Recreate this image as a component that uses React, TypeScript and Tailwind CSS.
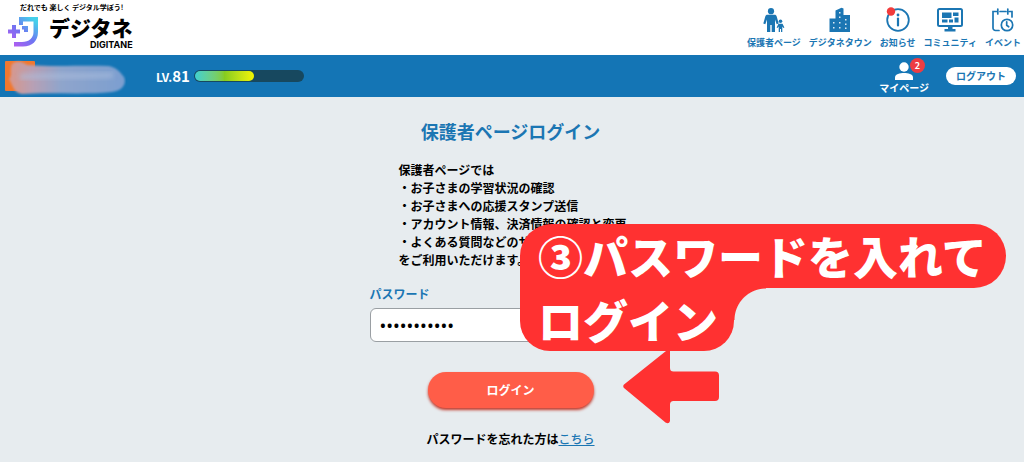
import type { ReactNode } from "react";

function ParentIcon() {
  return (
    <svg viewBox="0 0 22 26" className="h-[26px] w-[22px]" fill="currentColor" aria-hidden="true">
      <circle cx="8" cy="4.200" r="3.100" />
      <path d="M4.500 7.800h7c1.200 0 1.900.6 2.200 1.700l2 7-2 .8L12 12.500V25H8.700V18H7.300v7H4V12.500L2.300 17.300.3 16.500 2.300 9.500c.3-1.100 1-1.700 2.200-1.700z" />
      <circle cx="17.500" cy="14.300" r="1.800" />
      <path d="M15.500 16.700h4l1.900 3.900-1 .5-1.100-1.600V25H18v-3h-1v3h-1.300v-5.500l-1.100 1.600-1-.5z" />
    </svg>
  );
}

function TownIcon() {
  return (
    <svg viewBox="0 0 22 26" className="h-[26px] w-[22px]" aria-hidden="true">
      <path fill="currentColor" d="M.5 11.500H6.500V3.500L12.500.8l2 .7V8H21v17H.5z" />
      <path fill="#fff" opacity=".85" d="M10 5h1.500v1.500H10zM10 9.500h1.500V11H10zM16 12h1.500v1.500H16zM4 15h1.500v1.500H4zM10 15h1.500v1.500H10zM16 16.500h1.500V18H16zM4 20h1.500v1.500H4zM10 20h1.500v1.500H10zM16 20.500h1.500V22H16z" />
    </svg>
  );
}

function NoticeIcon() {
  return (
    <svg viewBox="0 0 24 26" className="h-[26px] w-6" fill="none" aria-hidden="true">
      <circle cx="12" cy="13" r="10.800" stroke="currentColor" strokeWidth="1.800" />
      <circle cx="12" cy="8" r="1.400" fill="currentColor" />
      <path d="M12 11.500V18.500" stroke="currentColor" strokeWidth="2.200" strokeLinecap="round" />
      <circle cx="5" cy="4.500" r="4.200" fill="#f23b3b" />
    </svg>
  );
}

function CommunityIcon() {
  return (
    <svg viewBox="0 0 26 26" className="h-[26px] w-[26px]" fill="none" aria-hidden="true">
      <rect x="1" y="2" width="24" height="17" rx="1.500" stroke="currentColor" strokeWidth="2" />
      <path fill="currentColor" d="M5 5.500h9.500V11H5zM5 12.500h5.500V15.500H5zM12 12.500h4V15.500H12zM16 5.500h5.500V9H16zM17.500 10.500h4v5h-4zM11 19h4.500v3.500H11zM7.500 22h11v2.500h-11z" />
    </svg>
  );
}

function EventIcon() {
  return (
    <svg viewBox="0 0 24 26" className="h-[26px] w-6" fill="none" stroke="currentColor" strokeWidth="1.700" strokeLinecap="round" aria-hidden="true">
      <path d="M8 23.500H4.500A2.500 2.500 0 0 1 2 21V4.500h3.500M9 4.500h6M18.500 4.500H21V10M6.800 2v5M16.800 2v5" />
      <circle cx="16" cy="18" r="5.700" />
      <path d="M15.700 14.800v3.500l2 1.500" />
    </svg>
  );
}

function LogoMark() {
  return (
    <svg viewBox="0 0 31 30" className="h-[30px] w-[31px]" fill="none" aria-hidden="true">
      <defs>
        <linearGradient id="mark" x1="4" y1="28" x2="26" y2="3" gradientUnits="userSpaceOnUse">
          <stop stopColor="#b45cf0" />
          <stop offset=".5" stopColor="#6f74f2" />
          <stop offset="1" stopColor="#45d0ea" />
        </linearGradient>
      </defs>
      <path fill="url(#mark)" d="M4 8H8V12.500H12V16.500H8V21H4V16.500H0V12.500H4zM11 0H30V15C30 24 24 29.500 15 29.500H6V25H14C21 25 25.500 21 25.500 15V4.500H15V8H11zM14 9H20V15H16V12.500H14z" />
    </svg>
  );
}

function PlayerName() {
  return (
    <svg viewBox="0 0 126 42" className="h-[42px] w-[126px]" aria-hidden="true">
      <defs>
        <linearGradient id="smear" x1="0" x2="1">
          <stop stopColor="#d9978b" />
          <stop offset=".2" stopColor="#b8a0b4" />
          <stop offset=".45" stopColor="#8fa5cc" />
          <stop offset="1" stopColor="#7c9fd0" />
        </linearGradient>
        <filter id="soft" x="-10%" y="-20%" width="120%" height="140%">
          <feGaussianBlur stdDeviation="1.100" />
        </filter>
        <filter id="softer" x="-10%" y="-200%" width="120%" height="500%">
          <feGaussianBlur stdDeviation="2" />
        </filter>
      </defs>
      <rect x="5" y="6" width="30" height="30" rx="1" fill="#f07830" />
      <path filter="url(#soft)" d="M12 9C17 5 23 7 27 10C54 12 84 10 108 11C116 12 120 17 124 22C127 29 122 36 112 37C84 40 48 37 22 39C14 38 13 31 9 24C13 20 9 15 12 9z" fill="url(#smear)" />
      <path filter="url(#softer)" d="M20 22C48 20 82 22 113 20" stroke="#afc0de" strokeWidth="6" opacity=".5" fill="none" />
    </svg>
  );
}

const navItems: { label: string; icon: ReactNode }[] = [
  { label: "保護者ページ", icon: <ParentIcon /> },
  { label: "デジタネタウン", icon: <TownIcon /> },
  { label: "お知らせ", icon: <NoticeIcon /> },
  { label: "コミュニティ", icon: <CommunityIcon /> },
  { label: "イベント", icon: <EventIcon /> },
];

export default function App() {
  return (
    <div className="relative flex min-h-screen flex-col overflow-x-clip bg-[#e7ecef] font-['Noto_Sans_CJK_JP',sans-serif] text-black">
      <header className="flex h-[55px] items-start justify-between bg-white pr-[3px] pl-2">
        <a href="#" className="flex flex-col text-black">
          <span className="pt-[2px] pl-3 text-[7px] leading-[10px] font-bold whitespace-nowrap">だれでも 楽しく デジタル学ぼう!</span>
          <span className="flex gap-[10px] pt-[5px]">
            <LogoMark />
            <span className="flex flex-col items-end">
              <span className="text-[21px] leading-[21px] font-black">デジタネ</span>
              <span className="font-[Inter,sans-serif] text-[9px] leading-[13px] font-bold">DIGITANE</span>
            </span>
          </span>
        </a>
        <nav className="flex gap-2 pt-[7px] text-[#1b76b3]">
          {navItems.map((item) => (
            <a key={item.label} href="#" className="flex flex-col items-center gap-[3px]">
              {item.icon}
              <span className="text-[9px] leading-[14px] font-bold whitespace-nowrap">{item.label}</span>
            </a>
          ))}
        </nav>
      </header>

      <div className="flex h-[42px] items-center justify-between bg-[#1475b5] pr-2 text-white">
        <div className="flex items-center">
          <PlayerName />
          <span className="ml-[30px] text-[12px] leading-5 font-bold">
            LV.<b className="text-[15px] font-bold">81</b>
          </span>
          <div role="progressbar" aria-label="LV.81" aria-valuenow={54} className="ml-1 h-3 w-[110px] rounded-full bg-[#17485f] p-px">
            <div className="h-full w-[55%] rounded-full bg-linear-to-r from-[#3fcfd0] via-[#86cc20] to-[#f2f500]" />
          </div>
        </div>
        <div className="flex items-center gap-[17px]">
          <a href="#" className="relative flex flex-col items-center pt-1">
            <svg viewBox="0 0 18 18" className="h-[18px] w-[18px]" fill="currentColor" aria-hidden="true">
              <circle cx="9" cy="5" r="4.700" />
              <path d="M0 18v-2.500C0 12 5 11 9 11s9 1 9 4.500V18z" />
            </svg>
            <span className="text-[10px] leading-[15px] font-bold">マイページ</span>
            <span className="absolute top-0 right-1 flex size-[15px] items-center justify-center rounded-full bg-[#ee3d42] text-[9px] leading-none font-bold">2</span>
          </a>
          <button type="button" className="h-[18px] w-[70px] rounded-full bg-white text-[10px] leading-[18px] font-bold text-[#1b76b3]">ログアウト</button>
        </div>
      </div>

      <main className="flex flex-col items-center pt-[22px] pr-[3px]">
        <h1 className="text-[18px] leading-6 font-bold text-[#1b76b3]">保護者ページログイン</h1>
        <div className="mt-[18px] w-[224px] text-[12px] leading-[18px] font-bold whitespace-nowrap">
          <p>保護者ページでは</p>
          <ul>
            <li>・お子さまの学習状況の確認</li>
            <li>・お子さまへの応援スタンプ送信</li>
            <li>・アカウント情報、決済情報の確認と変更</li>
            <li>・よくある質問などのサ</li>
          </ul>
          <p>をご利用いただけます。</p>
        </div>
        <form className="flex w-[282px] flex-col" onSubmit={(e) => e.preventDefault()}>
          <label htmlFor="password" className="mt-[16px] text-[12px] leading-[18px] font-bold text-[#1b76b3]">パスワード</label>
          <input
            id="password"
            type="password"
            defaultValue="abcdefghijk"
            className="mt-[5px] h-[34px] w-full rounded-[6px] border border-[#9a9fa3] bg-white px-[9px] font-['Noto_Sans',sans-serif] text-[18px] text-black"
          />
          <button type="submit" className="mt-[30px] h-9 w-[166px] self-center rounded-full bg-[#ff5d48] text-[12px] font-bold text-white shadow-[0_2px_3px_#c0392b]">ログイン</button>
        </form>
        <p className="mt-[22px] text-[12px] leading-[18px] font-bold">
          パスワードを忘れた方は<a href="#" className="font-medium text-[#1b76b3] underline">こちら</a>
        </p>
      </main>

      <aside className="absolute top-[224px] left-[calc(50%+8px)] flex flex-col items-start text-[45px] leading-[63px] font-black whitespace-nowrap text-white">
        <div className="h-16 w-[486px] rounded-t-[32px] rounded-br-[32px] bg-[#ff3131] pl-[18px]">③パスワードを入れて</div>
        <div className="relative h-[63px] w-[214px] rounded-b-[30px] bg-[#ff3131] pl-[18px]">
          ログイン
          <span className="absolute top-0 left-full size-8 bg-[radial-gradient(circle_at_100%_100%,transparent_31px,#ff3131_32px)]" />
        </div>
        <svg viewBox="0 0 97 74" className="ml-[103px] h-[74px] w-[97px]" fill="#ff3131" aria-hidden="true">
          <path d="M1 33.500L43 0H47V17Q47 20.500 50.500 20.500H92Q96 20.500 96 24.500V46Q96 50 92 50H50.500Q47 50 47 53.500V70Q46 73.500 42.500 71.500L1 37Q-.5 35.200 1 33.500z" />
        </svg>
      </aside>
    </div>
  );
}
